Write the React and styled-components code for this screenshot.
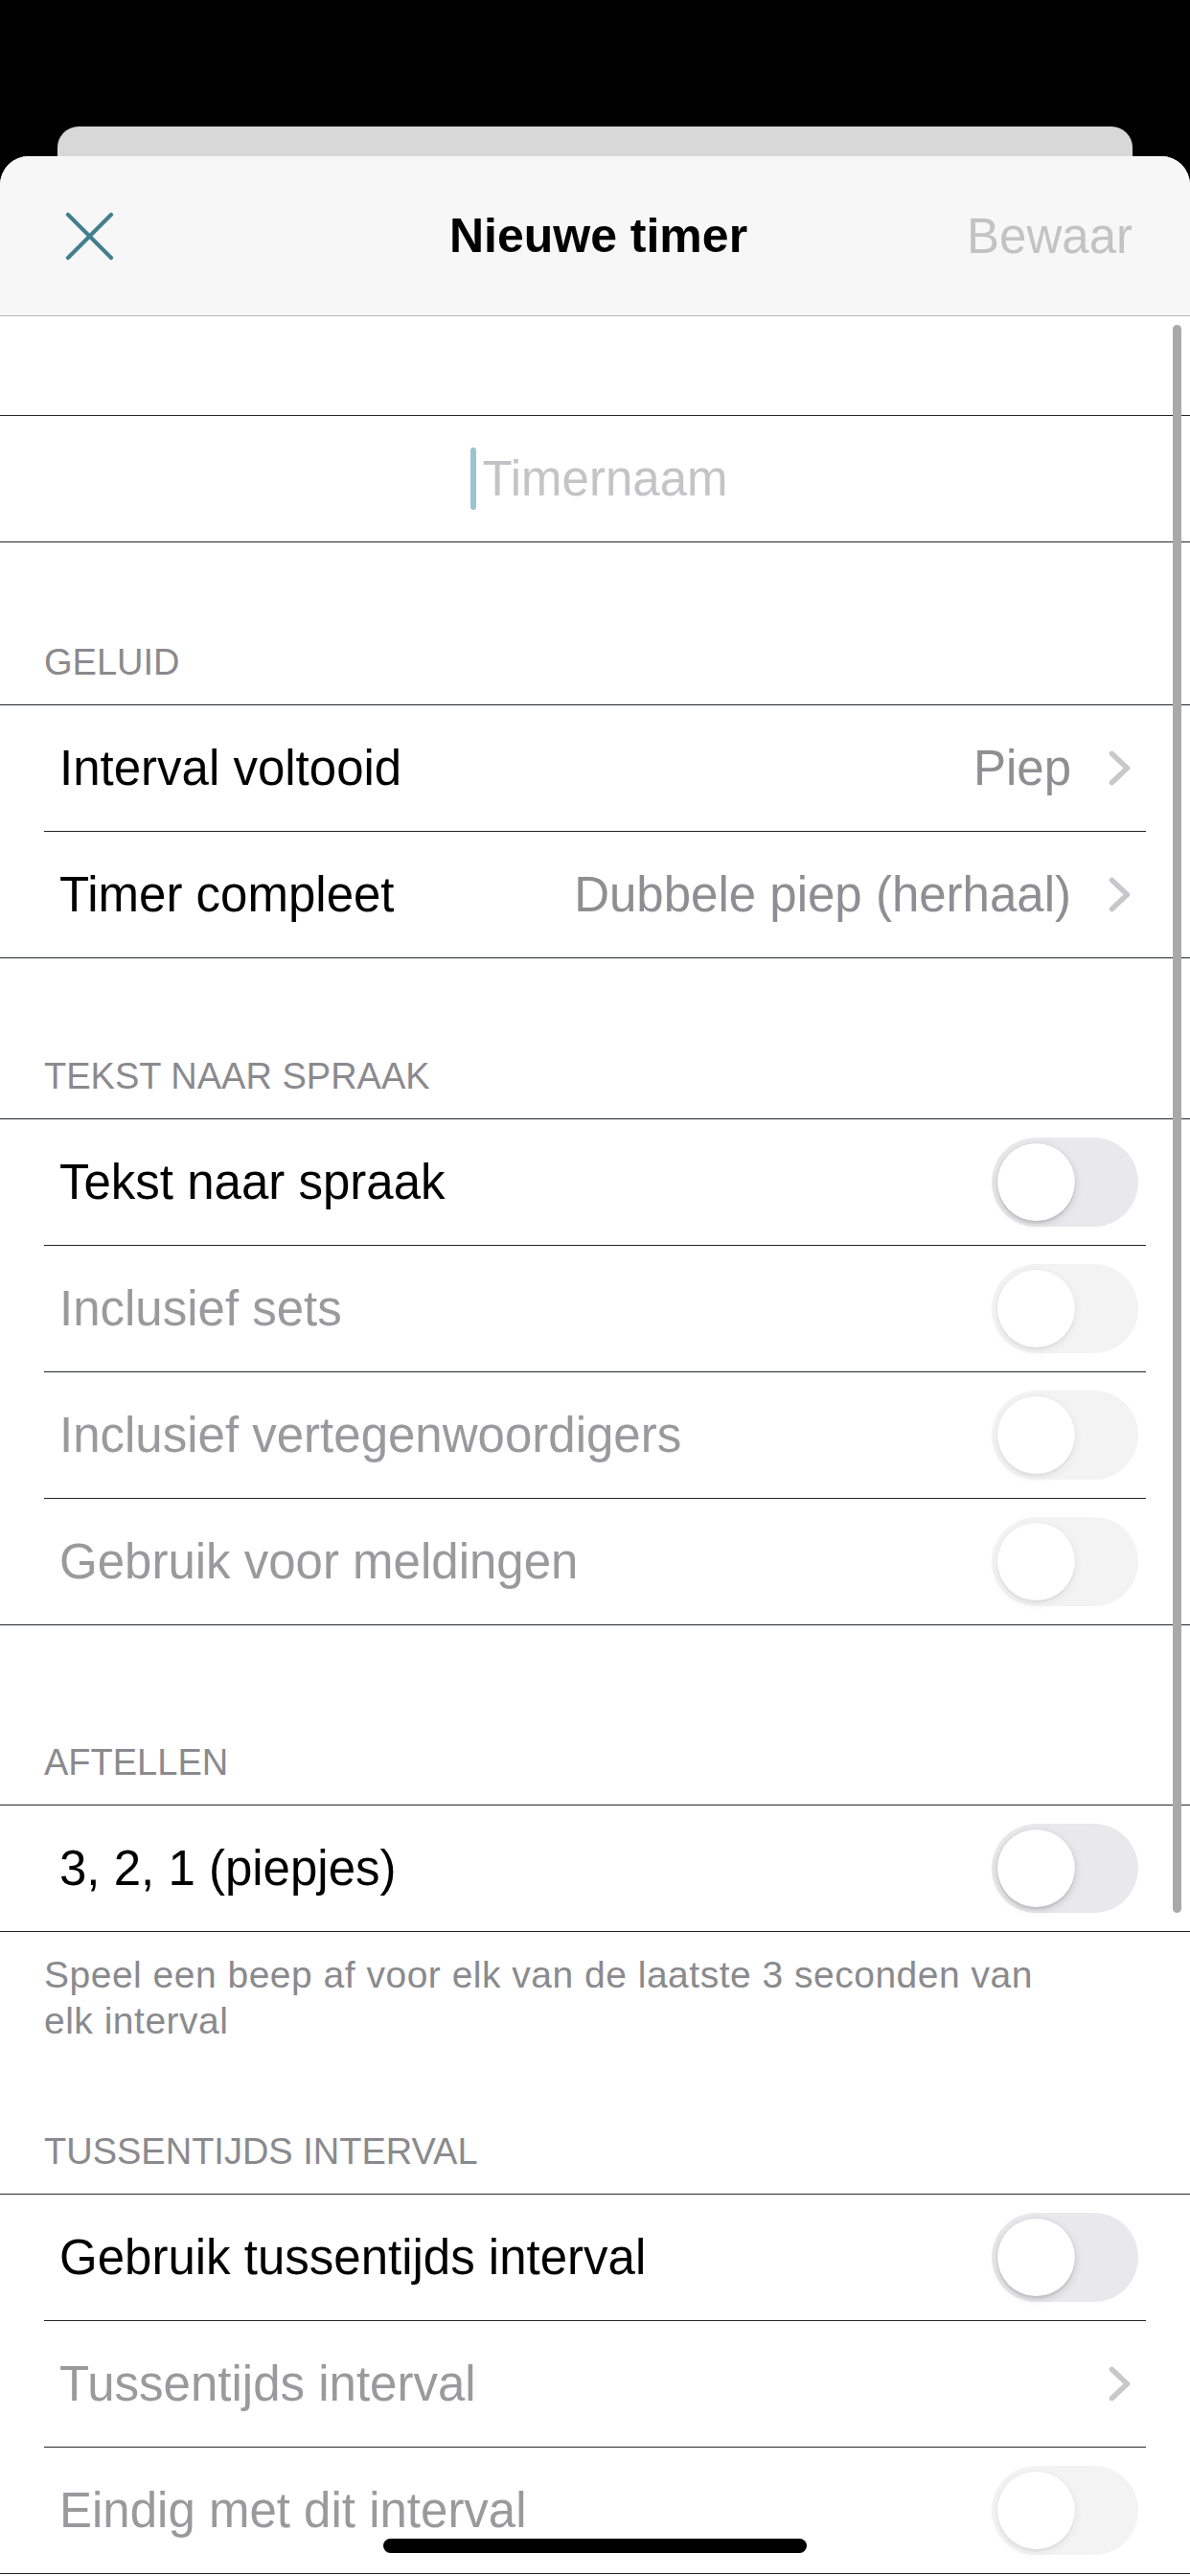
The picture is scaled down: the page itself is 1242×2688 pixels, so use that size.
import React from "react"
import styled, { createGlobalStyle } from "styled-components"

const LINE = "#23262b"
const GRAY = "#8a8a8e"

const GlobalStyle = createGlobalStyle`
  html, body {
    margin: 0;
    background: #000;
  }
  body {
    font-family: "Liberation Sans", Arial, sans-serif;
    -webkit-font-smoothing: antialiased;
  }
  * {
    box-sizing: border-box;
  }
`

const Screen = styled.div`
  position: relative;
  height: 2688px;
  overflow: hidden;
  background: #000;
  padding-top: 132px;
  display: flex;
  flex-direction: column;
`

const BackCard = styled.div`
  height: 31px;
  margin: 0 60px;
  background: #d8d8d8;
  border-radius: 22px 22px 0 0;
`

const Sheet = styled.div`
  position: relative;
  flex: 1;
  background: #fff;
  border-radius: 30px 30px 0 0;
  overflow: hidden;
`

const Header = styled.header`
  height: 167px;
  display: grid;
  grid-template-columns: 1fr auto 1fr;
  align-items: center;
  padding: 0 60px 0 67px;
  background: #f7f7f7;
  border-bottom: 1px solid #b8b8b8;
`

const CloseButton = styled.button`
  justify-self: start;
  display: flex;
  padding: 0;
  border: 0;
  background: none;
`

const Title = styled.h1`
  margin: 0;
  font-size: 50px;
  font-weight: 700;
  color: #000;
`

const SaveButton = styled.span`
  justify-self: end;
  font-size: 51px;
  color: #c3c3c3;
`

const Spacer = styled.div`
  height: 103px;
`

const Group = styled.div`
  border-top: 1px solid ${LINE};
  border-bottom: 1px solid ${LINE};
`

const Divider = styled.div`
  height: 1px;
  margin: 0 46px;
  background: ${LINE};
`

const SectionHeader = styled.div`
  padding: ${(p) => p.$top}px 46px 20px;
  font-size: 38px;
  line-height: 48px;
  color: ${GRAY};
  text-transform: uppercase;
`

const SectionFooter = styled.p`
  margin: 0;
  padding: 21px 46px 0;
  max-width: 1152px;
  font-size: 39px;
  line-height: 48px;
  letter-spacing: 0.5px;
  color: ${GRAY};
`

const Row = styled.div`
  height: 131px;
  display: flex;
  align-items: center;
  justify-content: ${(p) => (p.$center ? "center" : "flex-start")};
  padding: 0 54px 0 62px;
`

const Label = styled.span`
  flex: 1;
  font-size: 51px;
  color: ${(p) => (p.$muted ? "#9a9a9c" : "#000")};
  white-space: nowrap;
`

const Value = styled.span`
  font-size: 51px;
  color: #8e8e93;
  margin-right: 39px;
  white-space: nowrap;
`

const ChevronBox = styled.span`
  display: flex;
  margin-right: 8px;
`

const Cursor = styled.span`
  width: 6px;
  height: 65px;
  border-radius: 3px;
  background: #9cc4cf;
`

const Placeholder = styled.span`
  margin-left: 7px;
  font-size: 51px;
  color: #c4c4c6;
`

const Track = styled.span`
  width: 153px;
  height: 93px;
  border-radius: 47px;
  background: #e9e9eb;
  display: flex;
  align-items: center;
  padding: 0 6px;
  opacity: ${(p) => (p.$disabled ? 0.5 : 1)};
`

const Thumb = styled.span`
  width: 81px;
  height: 81px;
  border-radius: 50%;
  background: #fff;
  box-shadow: 0 3px 8px rgba(0, 0, 0, 0.15), 0 3px 1px rgba(0, 0, 0, 0.06),
    0 0 0 1px rgba(0, 0, 0, 0.04);
`

const ScrollBar = styled.div`
  position: absolute;
  top: 176px;
  right: 9px;
  width: 9px;
  height: 1657px;
  border-radius: 5px;
  background: #a9a9a9;
`

const HomeIndicator = styled.div`
  position: absolute;
  bottom: 24px;
  left: 50%;
  transform: translateX(-50%);
  width: 442px;
  height: 15px;
  border-radius: 8px;
  background: #000;
`

const CloseIcon = () => (
  <svg width="52" height="52" viewBox="0 0 52 52">
    <path
      d="M4 4 L49 49 M49 4 L4 49"
      stroke="#417f8e"
      strokeWidth="4.2"
      strokeLinecap="round"
      fill="none"
    />
  </svg>
)

const Chevron = () => (
  <ChevronBox>
    <svg width="23" height="37" viewBox="0 0 23 37">
      <polyline
        points="3.5,3.5 19.5,18.5 3.5,33.5"
        stroke="#c7c7cc"
        strokeWidth="5.5"
        strokeLinecap="round"
        strokeLinejoin="round"
        fill="none"
      />
    </svg>
  </ChevronBox>
)

const Toggle = ({ disabled }) => (
  <Track $disabled={disabled}>
    <Thumb />
  </Track>
)

const LinkRow = ({ label, value, muted }) => (
  <Row>
    <Label $muted={muted}>{label}</Label>
    {value && <Value>{value}</Value>}
    <Chevron />
  </Row>
)

const SwitchRow = ({ label, muted }) => (
  <Row>
    <Label $muted={muted}>{label}</Label>
    <Toggle disabled={muted} />
  </Row>
)

export default function App() {
  return (
    <Screen>
      <GlobalStyle />
      <BackCard />
      <Sheet>
        <Header>
          <CloseButton aria-label="Sluiten">
            <CloseIcon />
          </CloseButton>
          <Title>Nieuwe timer</Title>
          <SaveButton>Bewaar</SaveButton>
        </Header>

        <Spacer />
        <Group>
          <Row $center>
            <Cursor />
            <Placeholder>Timernaam</Placeholder>
          </Row>
        </Group>

        <SectionHeader $top={101}>Geluid</SectionHeader>
        <Group>
          <LinkRow label="Interval voltooid" value="Piep" />
          <Divider />
          <LinkRow label="Timer compleet" value="Dubbele piep (herhaal)" />
        </Group>

        <SectionHeader $top={99}>Tekst naar spraak</SectionHeader>
        <Group>
          <SwitchRow label="Tekst naar spraak" />
          <Divider />
          <SwitchRow label="Inclusief sets" muted />
          <Divider />
          <SwitchRow label="Inclusief vertegenwoordigers" muted />
          <Divider />
          <SwitchRow label="Gebruik voor meldingen" muted />
        </Group>

        <SectionHeader $top={119}>Aftellen</SectionHeader>
        <Group>
          <SwitchRow label="3, 2, 1 (piepjes)" />
        </Group>
        <SectionFooter>
          Speel een beep af voor elk van de laatste 3 seconden van elk interval
        </SectionFooter>

        <SectionHeader $top={88}>Tussentijds interval</SectionHeader>
        <Group>
          <SwitchRow label="Gebruik tussentijds interval" />
          <Divider />
          <LinkRow label="Tussentijds interval" muted />
          <Divider />
          <SwitchRow label="Eindig met dit interval" muted />
        </Group>

        <ScrollBar />
      </Sheet>
      <HomeIndicator />
    </Screen>
  )
}
